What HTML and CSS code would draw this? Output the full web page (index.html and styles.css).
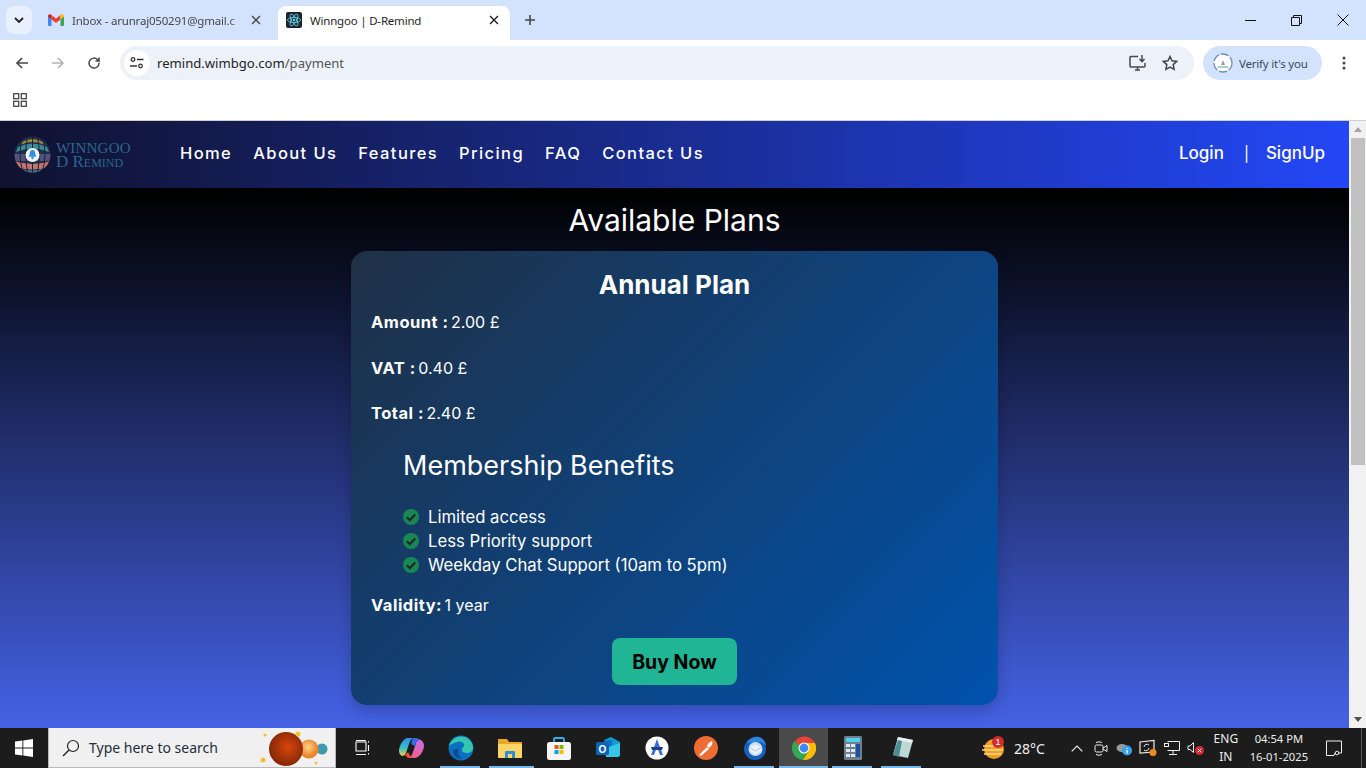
FILE: index.html
```html
<!DOCTYPE html>
<html lang="en">
<head>
    <meta charset="UTF-8">
    <meta name="viewport" content="width=device-width, initial-scale=1.0">
    <title>Winngoo | D-Remind</title>
    <link rel="stylesheet" href="styles.css">
</head>
<body>
    <!-- browser tabs -->
    <div class="tabstrip">
        <div class="tab-search"><svg width="10" height="6" viewBox="0 0 10 6"><path d="M1 1l4 4 4-4" fill="none" stroke="#1f1f1f" stroke-width="1.8"/></svg></div>
        <div class="tab">
            <svg class="favicon" viewBox="0 0 16 12"><path d="M0 2v9a1 1 0 0 0 1 1h2.500V5z" fill="#4285f4"/><path d="M16 2v9a1 1 0 0 1-1 1h-2.500V5z" fill="#34a853"/><path d="M3.500 5.500V1L8 4.500 12.500 1v4.500L8 9z" fill="#ea4335"/><path d="M0 2.500C0 .5 2 -.5 3.500 .8V5.500z" fill="#c5221f"/><path d="M16 2.500C16 .5 14 -.5 12.500 .8V5.500z" fill="#fbbc04"/></svg>
            <span class="tab-title fade">Inbox - arunraj050291@gmail.c</span>
            <svg class="tab-close" viewBox="0 0 10 10"><path d="M1 1l8 8M9 1l-8 8" stroke="#474747" stroke-width="1.4"/></svg>
        </div>
        <div class="tab active">
            <svg class="favicon" viewBox="0 0 16 16"><rect width="16" height="16" rx="2" fill="#20232a"/><g fill="none" stroke="#61dafb" stroke-width=".8"><ellipse cx="8" cy="8" rx="6.500" ry="2.600"/><ellipse cx="8" cy="8" rx="6.500" ry="2.600" transform="rotate(60 8 8)"/><ellipse cx="8" cy="8" rx="6.500" ry="2.600" transform="rotate(120 8 8)"/></g><circle cx="8" cy="8" r="1.300" fill="#61dafb"/></svg>
            <span class="tab-title">Winngoo | D-Remind</span>
            <svg class="tab-close" viewBox="0 0 10 10"><path d="M1 1l8 8M9 1l-8 8" stroke="#1f1f1f" stroke-width="1.4"/></svg>
        </div>
        <svg class="new-tab" width="12" height="12" viewBox="0 0 12 12"><path d="M6 1v10M1 6h10" stroke="#474747" stroke-width="1.6"/></svg>
        <div class="window-btns">
            <svg width="11" height="11" viewBox="0 0 11 11"><path d="M0 5.500h11" stroke="#111" stroke-width="1"/></svg>
            <svg width="11" height="11" viewBox="0 0 11 11"><path d="M.5 2.500h8v8h-8zM2.500 2.500v-2h8v8h-2" fill="none" stroke="#111"/></svg>
            <svg width="12" height="12" viewBox="0 0 12 12"><path d="M.5.5l11 11M11.500.5l-11 11" stroke="#111"/></svg>
        </div>
    </div>

    <!-- address bar -->
    <div class="toolbar">
        <svg class="tool" width="14" height="14" viewBox="0 0 14 14"><path d="M13 7H2M7 2L2 7l5 5" fill="none" stroke="#474747" stroke-width="1.600"/></svg>
        <svg class="tool" width="14" height="14" viewBox="0 0 14 14"><path d="M1 7h11M7 2l5 5-5 5" fill="none" stroke="#b4b4b4" stroke-width="1.600"/></svg>
        <svg class="tool" width="14" height="14" viewBox="0 0 14 14"><path d="M12 7a5 5 0 1 1-1.500-3.500L12 5V1.500M12 5H8.500" fill="none" stroke="#474747" stroke-width="1.500"/></svg>
        <div class="omnibox">
            <span class="site-info"><svg width="14" height="12" viewBox="0 0 14 12"><g fill="none" stroke="#333" stroke-width="1.300"><circle cx="3" cy="2.500" r="1.800"/><path d="M7 2.500h6.500M0 9h7"/><circle cx="10.500" cy="9" r="1.800"/></g></svg></span>
            <span class="url">remind.wimbgo.com<span class="url-path">/payment</span></span>
            <svg class="omni-icon" width="18" height="16" viewBox="0 0 18 16"><path d="M9 1.500H2a1 1 0 0 0-1 1V11a1 1 0 0 0 1 1h13a1 1 0 0 0 1-1V8M6 15h5M8.500 12v3" fill="none" stroke="#474747" stroke-width="1.500"/><path d="M13 0v6M10.500 4l2.500 2.700L15.500 4" fill="none" stroke="#474747" stroke-width="1.500"/></svg>
            <svg class="omni-icon" width="16" height="16" viewBox="0 0 16 16"><path d="M8 1.500l2 4.300 4.700.6-3.500 3.200.9 4.700L8 12l-4.100 2.300.9-4.700L1.300 6.400 6 5.800z" fill="none" stroke="#474747" stroke-width="1.500"/></svg>
        </div>
        <div class="verify">
            <svg width="20" height="20" viewBox="0 0 20 20"><circle cx="10" cy="10" r="9" fill="#fff" stroke="#6d8fbe" stroke-width="1.300" stroke-dasharray="8 2"/><path d="M8 12l2-5 2 5z" fill="#8aa0b5"/><path d="M5 14h10" stroke="#6fb39a" stroke-width="1.200"/></svg>
            <span>Verify it's you</span>
        </div>
        <svg class="kebab" width="4" height="14" viewBox="0 0 4 14"><circle cx="2" cy="2" r="1.500" fill="#474747"/><circle cx="2" cy="7" r="1.500" fill="#474747"/><circle cx="2" cy="12" r="1.500" fill="#474747"/></svg>
    </div>

    <div class="bookmarks">
        <svg width="14" height="14" viewBox="0 0 14 14"><g fill="none" stroke="#474747" stroke-width="1.300"><rect x=".7" y=".7" width="5" height="5"/><rect x="8.300" y=".7" width="5" height="5"/><rect x=".7" y="8.300" width="5" height="5"/><rect x="8.300" y="8.300" width="5" height="5"/></g></svg>
    </div>

    <div class="viewport">
        <div class="page">
            <header class="navbar">
                <a class="brand">
                    <svg width="37" height="37" viewBox="0 0 37 37">
                        <defs><clipPath id="globe"><circle cx="18.500" cy="18.500" r="18"/></clipPath></defs>
                        <g clip-path="url(#globe)">
                            <rect width="37" height="37" fill="#1c3244"/>
                            <path d="M8 6Q18.500 0 29 6L31 9Q18.500 3 6 9z" fill="#a5803f"/>
                            <path d="M4 11Q18.500 4 33 11L35 16Q18.500 9 2 16z" fill="#3f8a9a"/>
                            <path d="M0 18h37v7H0z" fill="#54507c"/>
                            <path d="M0 25Q18.500 31 37 25L35 31Q18.500 36 2 31z" fill="#c9716c"/>
                            <path d="M4 32Q18.500 37 33 32L30 37H7z" fill="#3b7c92"/>
                            <g stroke="#14233c" stroke-width="1" fill="none"><path d="M18.500 0v37M9 1Q3 18 9 36M28 1q6 18 0 35M13.500 1Q10 18 13.500 36M23.500 1q3.500 17 0 35"/></g>
                        </g>
                        <circle cx="18.500" cy="19" r="7" fill="#f2f5fa"/>
                        <path d="M18.500 14c-2 0-2.800 1.600-2.800 3.500 0 1.800-1 2.300-1 3.300h7.600c0-1-1-1.500-1-3.300S20.500 14 18.500 14z" fill="#2f8fe0"/>
                        <circle cx="18.500" cy="22" r="1.200" fill="#2f8fe0"/>
                    </svg>
                    <span class="brand-name">
                        <span class="brand-top">Winngoo</span>
                        <span class="brand-bottom">D Remind</span>
                    </span>
                </a>
                <nav class="nav-links">
                    <a>Home</a>
                    <a>About Us</a>
                    <a>Features</a>
                    <a>Pricing</a>
                    <a>FAQ</a>
                    <a>Contact Us</a>
                </nav>
                <div class="nav-auth">
                    <a>Login</a>
                    <span class="nav-sep">|</span>
                    <a>SignUp</a>
                </div>
            </header>

            <main class="plans">
                <h2 class="plans-title">Available Plans</h2>
                <section class="plan-card">
                    <h3 class="plan-name">Annual Plan</h3>
                    <div class="price-rows">
                        <p><b>Amount :</b> 2.00 £</p>
                        <p><b>VAT :</b> 0.40 £</p>
                        <p><b>Total :</b> 2.40 £</p>
                    </div>
                    <div class="benefits">
                        <h4>Membership Benefits</h4>
                        <ul>
                            <li><svg class="check" viewBox="0 0 16 16"><circle cx="8" cy="8" r="8" fill="#198754"/><path d="M3.800 8.200l3 3 5.400-5.600" fill="none" stroke="#212529" stroke-width="2.200"/></svg>Limited access</li>
                            <li><svg class="check" viewBox="0 0 16 16"><circle cx="8" cy="8" r="8" fill="#198754"/><path d="M3.800 8.200l3 3 5.400-5.600" fill="none" stroke="#212529" stroke-width="2.200"/></svg>Less Priority support</li>
                            <li><svg class="check" viewBox="0 0 16 16"><circle cx="8" cy="8" r="8" fill="#198754"/><path d="M3.800 8.200l3 3 5.400-5.600" fill="none" stroke="#212529" stroke-width="2.200"/></svg>Weekday Chat Support (10am to 5pm)</li>
                        </ul>
                    </div>
                    <p class="validity"><b>Validity:</b> 1 year</p>
                    <button class="buy-btn" type="button">Buy Now</button>
                </section>
            </main>
        </div>
        <div class="scrollbar">
            <span class="arrow-up"></span>
            <span class="thumb"></span>
            <span class="arrow-down"></span>
        </div>
    </div>

    <!-- windows taskbar -->
    <footer class="taskbar">
        <div class="start"><svg width="18" height="18" viewBox="0 0 18 18"><path d="M0 2.600l7.400-1v7H0zM8.300 1.400L18 0v8.600H8.300zM0 9.500h7.400v7l-7.400-1zM8.300 9.500H18V18l-9.700-1.400z" fill="#fff"/></svg></div>
        <div class="search">
            <svg width="18" height="18" viewBox="0 0 18 18"><circle cx="11" cy="7" r="5.500" fill="none" stroke="#222" stroke-width="1.200"/><path d="M7 11l-6 6" stroke="#222" stroke-width="1.400"/></svg>
            <span>Type here to search</span>
            <svg class="planets" width="76" height="38" viewBox="0 0 76 38">
                <defs>
                    <radialGradient id="mars" cx=".55" cy=".45"><stop offset="0" stop-color="#d8450c"/><stop offset="1" stop-color="#8c2a08"/></radialGradient>
                    <radialGradient id="venus" cx=".45" cy=".4"><stop offset="0" stop-color="#ffd28a"/><stop offset="1" stop-color="#e8842a"/></radialGradient>
                </defs>
                <circle cx="62" cy="20" r="5.500" fill="#3f9ab0"/>
                <circle cx="49" cy="20" r="9.500" fill="url(#venus)"/>
                <circle cx="26" cy="20" r="17" fill="url(#mars)"/>
                <g fill="#f2c230"><circle cx="3" cy="31" r="2.500"/><circle cx="38" cy="5" r="2.500"/><circle cx="5" cy="6" r="1.500"/><circle cx="56" cy="34" r="1.500"/></g>
            </svg>
        </div>
        <div class="apps">
            <div class="app"><svg width="16" height="16" viewBox="0 0 16 16"><path d="M1 2h10v9H1zM1 14.500h10M1 .5h10M13.500 1v1.500M13.500 5v6M13.500 13v1.500" fill="none" stroke="#fff" stroke-width="1.100"/></svg></div>
            <div class="app"><svg width="25" height="22" viewBox="0 0 25 22">
                <defs>
                    <linearGradient id="cop-l" x1="0" y1="0" x2="0" y2="1"><stop offset="0" stop-color="#2f8fe8"/><stop offset=".55" stop-color="#35c0c8"/><stop offset="1" stop-color="#f7c948"/></linearGradient>
                    <linearGradient id="cop-r" x1="0" y1="0" x2="0" y2="1"><stop offset="0" stop-color="#c86ae8"/><stop offset="1" stop-color="#f0608c"/></linearGradient>
                </defs>
                <path d="M8 1h6c-2 1-3 3-4 6l-3 9c-1 2-2 3-4 3-2-1-3-3-3-5C0 9 4 2 8 1z" fill="url(#cop-l)"/>
                <path d="M15 21H10c2-1 3-3 4-6l3-9c.6-2 2-3.500 4-3.500 2 1 4 3 4 6 0 6-5 12.500-10 12.500z" fill="url(#cop-r)"/>
                <path d="M14 1h3c2 0 3 1 3.500 2-2 0-3 1-3.500 3l-1 3-4-2c1-3 1-5 2-6z" fill="#2d6fe0"/>
                <path d="M6 18l3 3h6c-2-1-4-2-5-4l-1-2z" fill="#e8503c"/>
            </svg></div>
            <div class="app running"><svg width="26" height="26" viewBox="0 0 26 26"><circle cx="13" cy="13" r="12.500" fill="#0c6fc0"/><path d="M1 11C3 3 11 0 17 2c5 2 8 6 8 11 0 3-3 5-6 5-3 0-5-1-5-3 0-3 3-3 2-6-1-2-4-3-7-2-4 1-7 3-8 4z" fill="#35c6b0"/><path d="M5 16c0 5 5 8 10 8-4-2-6-6-4-10-3 0-5 0-6 2z" fill="#114a94"/></svg></div>
            <div class="app running stacked"><svg width="24" height="20" viewBox="0 0 24 20"><path d="M0 1h9l2 3h13v15a1 1 0 0 1-1 1H1a1 1 0 0 1-1-1z" fill="#e8a825"/><path d="M0 6h24v13a1 1 0 0 1-1 1H1a1 1 0 0 1-1-1z" fill="#fbd566"/><path d="M7 20v-6a1 1 0 0 1 1-1h8a1 1 0 0 1 1 1v6h-3v-4h-4v4z" fill="#2f8ed8"/></svg></div>
            <div class="app"><svg width="24" height="24" viewBox="0 0 24 24"><path d="M7 6V3a1 1 0 0 1 1-1h8a1 1 0 0 1 1 1v3" fill="none" stroke="#2ab4e8" stroke-width="1.800"/><rect y="6" width="24" height="18" rx="2.500" fill="#f5f5f5"/><rect x="7.500" y="9" width="4" height="4" fill="#e8502e"/><rect x="12.500" y="9" width="4" height="4" fill="#7fba00"/><rect x="7.500" y="14" width="4" height="4" fill="#00a4ef"/><rect x="12.500" y="14" width="4" height="4" fill="#ffb900"/></svg></div>
            <div class="app"><svg width="24" height="22" viewBox="0 0 24 22"><path d="M8 3l7-3 9 5v12c0 2-1 3-3 3H10z" fill="#0f9ad8"/><path d="M8 3h8v7H8z" fill="#1273c4"/><path d="M10 11l14-5v11c0 2-1 3-3 3H10z" fill="#38c6e8"/><rect y="5" width="13" height="13" rx="1.500" fill="#0f62b4"/><text x="6.500" y="15.500" class="outlook-o">O</text></svg></div>
            <div class="app"><svg width="24" height="24" viewBox="0 0 24 24"><circle cx="12" cy="12" r="11.500" fill="#fff"/><path d="M12 3l-6 16h3l3-8 3 8h3z" fill="#3a6fd8"/><path d="M6 11h12l-1 3H7z" fill="#1e3f8f"/></svg></div>
            <div class="app"><svg width="24" height="24" viewBox="0 0 24 24"><circle cx="12" cy="12" r="12" fill="#ef6c33"/><path d="M5 19l8-8 2 2-8 7zM13 10c1-3 3-4 5-5 1 2 0 5-3 7z" fill="#fff"/></svg></div>
            <div class="app running"><svg width="24" height="24" viewBox="0 0 24 24"><circle cx="12" cy="13" r="11" fill="#1560bd"/><path d="M4 7c1-4 7-7 12-6 4 1 7 5 7 9-2-3-5-4-8-4-3 0-7 1-11 1z" fill="#2b86e0"/><circle cx="12.500" cy="13" r="7" fill="#cfe0f5"/><path d="M7 11.500l5.500-3 5.500 3v3l-5.500 4-5.500-4z" fill="#eef3fb"/><path d="M7 11.500l5.500 3.500 5.500-3.500" fill="none" stroke="#a8c0e0"/></svg></div>
            <div class="app running current"><svg width="24" height="24" viewBox="0 0 24 24"><path d="M12 12L5.100 8 3 5a12 12 0 0 1 20 2H12z" fill="#ea4335"/><path d="M2.300 4.900A12 12 0 0 0 11 24l4-7-3-5-7-4z" fill="#34a853"/><path d="M23 7a12 12 0 0 1-12 17l6-10-5-7z" fill="#fbbc04"/><circle cx="12" cy="12" r="5.500" fill="#fff"/><circle cx="12" cy="12" r="4.400" fill="#4285f4"/></svg></div>
            <div class="app running"><svg width="18" height="24" viewBox="0 0 18 24"><rect width="18" height="24" rx="1.500" fill="#6e7f90"/><rect x="2" y="2" width="14" height="4" fill="#4fd0ec"/><g fill="#dfe6ec"><rect x="2" y="8" width="4" height="3"/><rect x="7" y="8" width="4" height="3"/><rect x="2" y="13" width="4" height="3"/><rect x="7" y="13" width="4" height="3"/><rect x="2" y="18" width="4" height="3"/><rect x="7" y="18" width="4" height="3"/></g><rect x="12" y="8" width="4" height="13" fill="#1f4f9c"/></svg></div>
            <div class="app running"><svg width="22" height="24" viewBox="0 0 22 24"><path d="M7 1l15 3-5 18-15-3z" fill="#bcd9d6"/><path d="M7 1l15 3-1 3L6 4z" fill="#e5eeee"/><path d="M2 19l5-15 4 1-3 16z" fill="#4b8d92"/></svg></div>
        </div>
        <div class="tray">
            <div class="weather">
                <svg width="24" height="24" viewBox="0 0 24 24"><circle cx="13" cy="13" r="10" fill="#f0a020"/><path d="M2 10h19M1 14h21M3 18h17" stroke="#f7d58a" stroke-width="1.500"/><circle cx="17" cy="6" r="6" fill="#d02c2c"/><text x="17" y="9" class="weather-badge">1</text></svg>
                <span>28°C</span>
            </div>
            <svg class="tray-chevron" width="12" height="7" viewBox="0 0 12 7"><path d="M.7 6.300L6 1l5.300 5.300" fill="none" stroke="#eee" stroke-width="1.200"/></svg>
            <div class="tray-icons">
                <svg width="16" height="16" viewBox="0 0 16 16"><rect x="2" y="5" width="8" height="7" rx="1.500" fill="none" stroke="#eee"/><path d="M10 8l4-2.500v6L10 9M3 2.500q3-1.500 6 0M3 14.500q3 1.500 6 0" fill="none" stroke="#eee"/></svg>
                <svg width="16" height="16" viewBox="0 0 16 16"><ellipse cx="6" cy="8" rx="5.500" ry="4" fill="#9a9a9a"/><circle cx="11" cy="10.500" r="5" fill="#3aa0e8"/><path d="M11 8v1M11 10v3.500" stroke="#fff" stroke-width="1.300"/></svg>
                <svg width="18" height="18" viewBox="0 0 18 18"><path d="M1 3l14-1.500V13L1 14z" fill="none" stroke="#eee" stroke-width="1.200"/><path d="M5 8a3 3 0 0 1 5-2M10 9a3 3 0 0 1-5 2" fill="none" stroke="#eee"/><circle cx="14" cy="13.500" r="3.500" fill="#f08a1d"/></svg>
                <svg width="16" height="16" viewBox="0 0 16 16"><path d="M3.500 1.500h12v9h-12M9 10.500v4M5 14.500h8" fill="none" stroke="#eee"/><rect x=".5" y="3.500" width="4" height="3" fill="#1c1c1c" stroke="#eee"/></svg>
                <svg width="18" height="16" viewBox="0 0 18 16"><path d="M1 6h2l3.500-3.500v10L3 9.500H1z" fill="none" stroke="#eee"/><circle cx="12.500" cy="10.500" r="4.500" fill="#d9262e"/><path d="M10.800 8.800l3.400 3.400M14.200 8.800l-3.400 3.400" stroke="#fff"/></svg>
            </div>
            <div class="lang">ENG<br>IN</div>
            <div class="clock">04:54 PM<br>16-01-2025</div>
            <svg class="notify" width="16" height="16" viewBox="0 0 16 16"><path d="M.5 1h15v12H9l-1 2.500H.5z" fill="none" stroke="#eee"/><circle cx="11" cy="13" r="1.800" fill="#1c1c1c" stroke="#eee"/></svg>
            <span class="show-desktop"></span>
        </div>
    </footer>
</body>
</html>
```

FILE: styles.css
```css
* {
    box-sizing: border-box;
}
html, body {
    margin: 0;
    height: 100%;
    overflow: hidden;
}
body {
    display: flex;
    flex-direction: column;
    font-family: "Noto Sans", sans-serif;
    background: #fff;
}
p, h2, h3, h4, ul {
    margin: 0;
    padding: 0;
}

/* browser chrome */
.tabstrip {
    display: flex;
    align-items: flex-end;
    height: 40px;
    background: #d3e3fd;
    position: relative;
}
.tab-search {
    display: flex;
    align-items: center;
    justify-content: center;
    width: 26px;
    height: 28px;
    margin: 0 10px 6px 6px;
    background: #e9f0fd;
    border-radius: 8px;
}
.tab {
    display: flex;
    align-items: center;
    width: 232px;
    height: 34px;
    padding: 0 13px 6px 6px;
    font-size: 11.500px;
    letter-spacing: -.2px;
    color: #474747;
    margin-right: 4px;
}
.tab.active {
    background: #fff;
    color: #1f1f1f;
    border-radius: 8px 8px 0 0;
    padding: 0 11px 6px 8px;
}
.favicon {
    width: 16px;
    height: 16px;
    flex: none;
    margin-right: 8px;
}
.tab-title {
    flex: 1;
    white-space: nowrap;
}
.fade {
    -webkit-mask-image: linear-gradient(90deg, #000 88%, transparent 97%);
    mask-image: linear-gradient(90deg, #000 88%, transparent 97%);
}
.tab-close {
    width: 10px;
    height: 10px;
    flex: none;
    margin-left: auto;
}
.new-tab {
    margin: 0 0 14px 10px;
}
.window-btns {
    display: flex;
    align-items: center;
    gap: 35px;
    margin: 0 17px 14px auto;
}
.toolbar {
    display: flex;
    align-items: center;
    height: 40px;
    padding: 6px 0 0 15px;
    background: #fff;
}
.tool {
    margin-right: 22px;
}
.tool:nth-child(3) {
    margin-right: 19px;
}
.omnibox {
    display: flex;
    align-items: center;
    width: 1074px;
    height: 34px;
    padding: 0 16px 0 4px;
    background: #edf2fa;
    border-radius: 17px;
    font-size: 13.100px;
    color: #1f1f1f;
}
.site-info {
    display: flex;
    align-items: center;
    justify-content: center;
    width: 26px;
    height: 26px;
    margin-right: 7px;
    background: #fff;
    border-radius: 50%;
}
.url {
    flex: 1;
}
.url-path {
    color: #555;
}
.omni-icon {
    margin-left: 15px;
}
.verify {
    display: flex;
    align-items: center;
    gap: 6px;
    width: 119px;
    height: 34px;
    margin-left: 9px;
    padding-left: 10px;
    background: #d3e3fd;
    border-radius: 17px;
    font-size: 11.500px;
    letter-spacing: -.2px;
    color: #3b4a63;
}
.kebab {
    margin-left: 20px;
}
.bookmarks {
    display: flex;
    align-items: center;
    height: 41px;
    padding: 0 0 1px 13px;
    background: #fff;
    border-bottom: 1px solid #d0d0d0;
}

/* the page */
.viewport {
    flex: 1;
    display: flex;
    min-height: 0;
}
.page {
    flex: 1;
    display: flex;
    flex-direction: column;
    font-family: Inter, sans-serif;
    color: #fff;
}
.navbar {
    display: flex;
    align-items: center;
    height: 67px;
    padding: 0 24px 3px 14px;
    background: linear-gradient(90deg, #10122e, #2347f6);
}
.brand {
    display: flex;
    align-items: center;
    gap: 5px;
    width: 166px;
    margin-top: 3px;
}
.brand-name {
    display: flex;
    flex-direction: column;
    font-family: "Liberation Serif", serif;
    color: #2b658f;
}
.brand-top, .brand-bottom {
    display: block;
    height: 14px;
    line-height: 14px;
    white-space: nowrap;
}
.brand-top {
    letter-spacing: .2px;
    text-transform: uppercase;
    font-size: 15px;
}
.brand-bottom {
    font-variant: small-caps;
    font-size: 17px;
}
.nav-links {
    display: flex;
    gap: 21px;
}
.nav-links a {
    font-size: 16.500px;
    font-weight: 500;
    letter-spacing: 1.400px;
}
.nav-auth {
    display: flex;
    align-items: center;
    margin-left: auto;
    font-size: 17px;
    font-weight: 500;
}
.nav-sep {
    margin: 0 17px 0 20px;
    font-weight: 400;
    font-size: 15px;
}
.plans {
    flex: 1;
    display: flex;
    flex-direction: column;
    align-items: center;
    padding-top: 12px;
    background: linear-gradient(180deg, #000, #4562e6);
}
.plans-title {
    font-size: 30px;
    line-height: 40px;
    font-weight: 400;
}
.plan-card {
    display: flex;
    flex-direction: column;
    width: 647px;
    margin-top: 11px;
    padding: 18px 20px 20px;
    background: linear-gradient(135deg, #1f3045, #0053ad);
    border-radius: 16px;
    box-shadow: 0 6px 16px rgba(0, 0, 0, .2);
    font-size: 16px;
    line-height: 24px;
}
.plan-name {
    font-size: 26px;
    line-height: 32px;
    font-weight: 700;
    text-align: center;
}
.price-rows {
    display: flex;
    flex-direction: column;
    gap: 21.500px;
    margin-top: 9px;
}
b {
    margin-right: -2px;
    font-size: 16.500px;
    font-weight: 700;
    letter-spacing: .5px;
}
.benefits {
    margin: 25px 0 0 32px;
}
.benefits h4 {
    font-size: 27px;
    line-height: 32px;
    font-weight: 400;
}
.benefits ul {
    margin-top: 23px;
    list-style: none;
}
.benefits li {
    display: flex;
    align-items: center;
    gap: 9px;
    font-size: 16.700px;
}
.check {
    width: 16px;
    height: 16px;
    flex: none;
}
.validity {
    margin-top: 16px;
}
.buy-btn {
    align-self: center;
    width: 125px;
    height: 47px;
    margin-top: 21px;
    border: none;
    border-radius: 8px;
    background: #20b594;
    color: #000;
    font-family: Inter, sans-serif;
    font-size: 19.500px;
    font-weight: 700;
}
.scrollbar {
    display: flex;
    flex-direction: column;
    align-items: center;
    width: 17px;
    padding: 6px 0;
    background: #f1f1f1;
}
.thumb {
    width: 14px;
    height: 327px;
    margin-top: 6px;
    background: #c1c1c1;
}
.arrow-up, .arrow-down {
    width: 0;
    height: 0;
    border: 4px solid transparent;
    border-top: none;
    border-bottom: 5px solid #a3a3a3;
}
.arrow-down {
    margin-top: auto;
    border-bottom: none;
    border-top: 5px solid #505050;
}

/* windows taskbar */
.taskbar {
    display: flex;
    align-items: stretch;
    flex: none;
    height: 40px;
    background: #1c1c1c;
    color: #eee;
}
.start {
    display: flex;
    align-items: center;
    justify-content: center;
    flex: none;
    width: 48px;
}
.search {
    display: flex;
    align-items: center;
    flex: none;
    width: 288px;
    padding-left: 13px;
    background: #f0f0f0;
    border: 1px solid #b8b8b8;
    border-top: none;
    color: #1f2d3d;
    font-size: 14px;
}
.search span {
    margin-left: 9px;
}
.planets {
    margin-left: auto;
    margin-right: -1px;
}
.apps {
    display: flex;
    flex: none;
    margin-left: 2px;
}
.app {
    display: flex;
    align-items: center;
    justify-content: center;
    width: 49px;
    position: relative;
}
.app.current {
    background: #4a4a4a;
}
.app.running::after {
    content: "";
    position: absolute;
    left: 4px;
    right: 5px;
    bottom: 0;
    height: 2px;
    background: #76b9ed;
}
.app.current::after {
    left: 0;
    right: 0;
}
.app.stacked::after {
    right: 0;
}
.outlook-o {
    fill: #fff;
    font-family: "Liberation Sans", sans-serif;
    font-size: 10px;
    font-weight: 700;
    text-anchor: middle;
}
.weather-badge {
    fill: #fff;
    font-family: "Liberation Sans", sans-serif;
    font-size: 9px;
    text-anchor: middle;
}
.tray {
    flex: 1;
    display: flex;
    align-items: center;
    padding-left: 55px;
    font-size: 12px;
}
.weather {
    display: flex;
    align-items: center;
    gap: 9px;
    font-size: 14px;
}
.tray-chevron {
    margin-left: 26px;
}
.tray-icons {
    display: flex;
    align-items: center;
    gap: 7px;
    margin-left: 10px;
}
.lang {
    width: 28px;
    margin-left: 7px;
    line-height: 18px;
    text-align: center;
}
.clock {
    width: 70px;
    margin-left: 4px;
    line-height: 18px;
    text-align: center;
    font-size: 11.200px;
}
.notify {
    margin-left: 12px;
}
.show-desktop {
    width: 1px;
    height: 100%;
    margin-left: auto;
    margin-right: 4px;
    background: #5a5a5a;
}
```
